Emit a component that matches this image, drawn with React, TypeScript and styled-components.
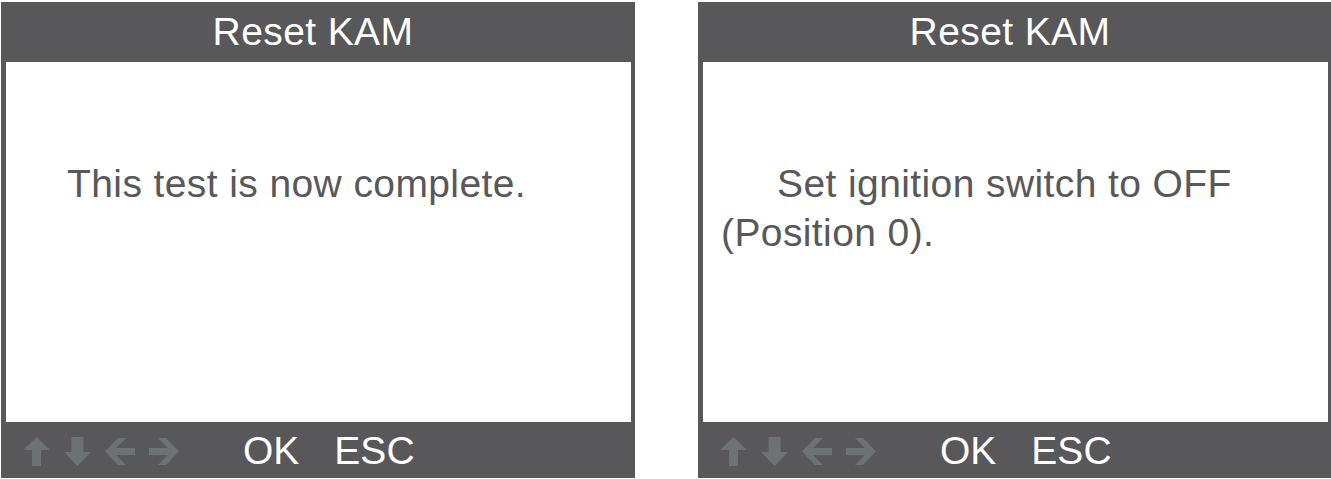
import React from "react"
import styled, { createGlobalStyle } from "styled-components"

const GlobalStyle = createGlobalStyle`
  html, body {
    margin: 0;
    padding: 0;
    background: #ffffff;
    overflow: hidden;
  }
`

const Page = styled.div`
  display: flex;
  gap: 63px;
  padding: 2px 0 0 1px;
  width: 1331px;
  height: 479px;
  box-sizing: border-box;
  font-family: "Liberation Sans", Arial, sans-serif;
`

const Screen = styled.div`
  flex: 0 0 634px;
  height: 476px;
  display: flex;
  flex-direction: column;
  background: #58585a;
`

const Title = styled.div`
  height: 60px;
  line-height: 60px;
  padding-right: 10px;
  text-align: center;
  color: #ffffff;
  font-size: 39px;
  letter-spacing: 0.4px;
`

const Body = styled.div<{ $padLeft: number; $indent: number }>`
  flex: 1;
  margin: 0 4px 0 5px;
  background: #ffffff;
  padding: 97px 10px 0 ${(p) => p.$padLeft}px;
  color: #58585a;
  font-size: 39px;
  line-height: 49px;
  letter-spacing: 0.4px;
  text-indent: ${(p) => p.$indent}px;
`

const Footer = styled.div`
  height: 56px;
  display: flex;
  align-items: center;
  padding-left: 22px;
`

const Arrows = styled.div`
  display: flex;
  align-items: center;
  gap: 14px;
  width: 160px;
  padding-top: 2px;
`

const Key = styled.span`
  color: #ffffff;
  font-size: 39px;
  line-height: 56px;
  padding-top: 2px;
  margin-left: 60px;
  & + & {
    margin-left: 35px;
  }
`

const ARROW = "#6f7272"

const UpArrow = () => (
  <svg width="27" height="29" viewBox="0 0 27 29">
    <polygon fill={ARROW} points="13.5,0 27,13 18,13 18,29 9,29 9,13 0,13" />
  </svg>
)

const DownArrow = () => (
  <svg width="27" height="29" viewBox="0 0 27 29">
    <polygon fill={ARROW} points="7.5,0 19.5,0 19.5,15 27,15 13.5,29 0,15 7.5,15" />
  </svg>
)

const LeftArrow = () => (
  <svg width="30" height="27" viewBox="0 0 30 27">
    <polygon fill={ARROW} points="0,13.5 13,0 21,0 11,10 30,10 30,17 11,17 21,27 13,27" />
  </svg>
)

const RightArrow = () => (
  <svg width="30" height="27" viewBox="0 0 30 27">
    <polygon fill={ARROW} points="30,13.5 17,0 9,0 19,10 0,10 0,17 19,17 9,27 17,27" />
  </svg>
)

const Panel = (props: { padLeft: number; indent: number; children: React.ReactNode }) => (
  <Screen>
    <Title>Reset KAM</Title>
    <Body $padLeft={props.padLeft} $indent={props.indent}>
      {props.children}
    </Body>
    <Footer>
      <Arrows>
        <UpArrow />
        <DownArrow />
        <LeftArrow />
        <RightArrow />
      </Arrows>
      <Key>OK</Key>
      <Key>ESC</Key>
    </Footer>
  </Screen>
)

export default function App() {
  return (
    <>
      <GlobalStyle />
      <Page>
        <Panel padLeft={61} indent={0}>
          This test is now complete.
        </Panel>
        <Panel padLeft={18} indent={56}>
          Set ignition switch to OFF (Position 0).
        </Panel>
      </Page>
    </>
  )
}
